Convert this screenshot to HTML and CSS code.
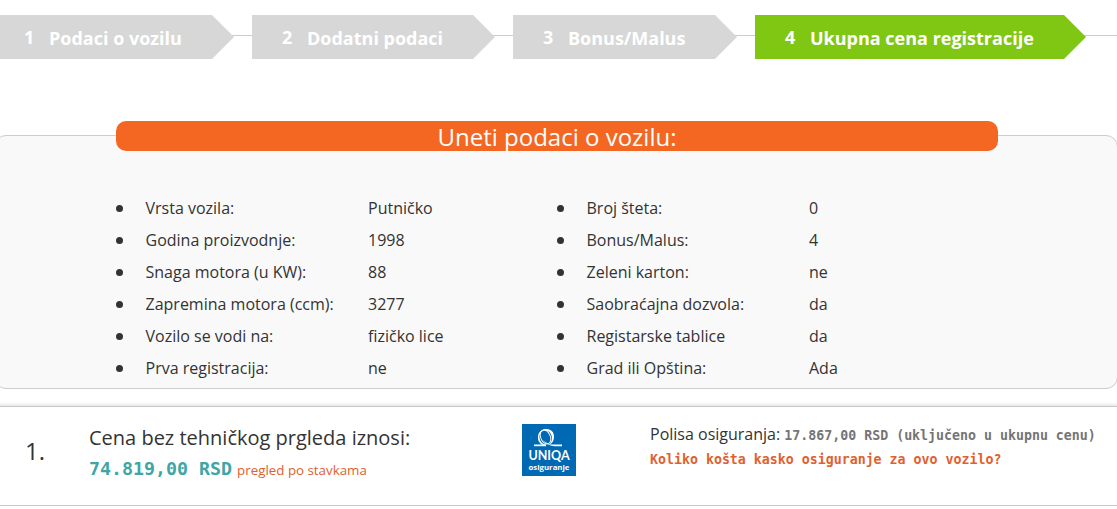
FILE: index.html
```html
<!DOCTYPE html>
<html lang="sr">
<head>
    <meta charset="UTF-8">
    <meta name="viewport" content="width=device-width, initial-scale=1.0">
    <title>Ukupna cena registracije</title>
    <link rel="stylesheet" href="styles.css">
</head>
<body>
    <div class="steps">
        <div class="step step-first"><span class="number">1</span><span class="name">Podaci o vozilu</span></div>
        <div class="step step-second"><span class="number">2</span><span class="name">Dodatni podaci</span></div>
        <div class="step step-third"><span class="number">3</span><span class="name">Bonus/Malus</span></div>
        <div class="step step-last active"><span class="number">4</span><span class="name">Ukupna cena registracije</span></div>
    </div>

    <div class="vehicle">
        <h2>Uneti podaci o vozilu:</h2>
        <div class="lists">
            <ul>
                <li><span class="label">Vrsta vozila:</span><span>Putničko</span></li>
                <li><span class="label">Godina proizvodnje:</span><span>1998</span></li>
                <li><span class="label">Snaga motora (u KW):</span><span>88</span></li>
                <li><span class="label">Zapremina motora (ccm):</span><span>3277</span></li>
                <li><span class="label">Vozilo se vodi na:</span><span>fizičko lice</span></li>
                <li><span class="label">Prva registracija:</span><span>ne</span></li>
            </ul>
            <ul>
                <li><span class="label">Broj šteta:</span><span>0</span></li>
                <li><span class="label">Bonus/Malus:</span><span>4</span></li>
                <li><span class="label">Zeleni karton:</span><span>ne</span></li>
                <li><span class="label">Saobraćajna dozvola:</span><span>da</span></li>
                <li><span class="label">Registarske tablice</span><span>da</span></li>
                <li><span class="label">Grad ili Opština:</span><span>Ada</span></li>
            </ul>
        </div>
    </div>

    <div class="offer">
        <div class="rank">1.</div>
        <div class="price">
            <div class="price-title">Cena bez tehničkog prgleda iznosi:</div>
            <div class="price-line"><span class="total">74.819,00 RSD</span><a class="details">pregled po stavkama</a></div>
        </div>
        <div class="logo">
            <svg class="logo-mark" viewBox="0 0 54 24" width="54" height="24">
                <rect x="12" y="20.500" width="12" height="1.700" fill="#fff"/>
                <path d="M29 20.500H40V22.200H33C28 22.200 24 20 21 16C24.500 19 27 20.300 29 20.500Z" fill="#fff"/>
                <path d="M24 22.200C18 21 15.500 17 16 12.500C16.500 7.500 20 5 24.500 5C29.500 5 32.500 9 32 13.500C31.700 17 30 19.500 27.500 20.500C29.500 18 30.300 15.500 29.800 12.500C29 8.500 26.500 6.500 23.500 6.500C20 6.500 17.500 9 17.500 13C17.500 17 20 20 24 20.700Z" fill="#fff"/>
                <ellipse cx="23.500" cy="13" rx="4.800" ry="7.300" transform="rotate(-24 23.500 13)" fill="none" stroke="#fff" stroke-width="0.900"/>
            </svg>
            <div class="logo-name">UNIQA</div>
            <div class="logo-sub">osiguranje</div>
        </div>
        <div class="policy">
            <div class="policy-line">Polisa osiguranja: <span class="amount">17.867,00 RSD (uključeno u ukupnu cenu)</span></div>
            <a class="kasko">Koliko košta kasko osiguranje za ovo vozilo?</a>
        </div>
    </div>
</body>
</html>
```
FILE: styles.css
```css
body {
margin: 0;
background-color: #fff;
color: #333;
font-family: "Open Sans", sans-serif;
font-size: 16px;
overflow: hidden;
}

.steps {
display: flex;
gap: 18px;
height: 44px;
padding-top: 15px;
background: linear-gradient(#ccc, #ccc) 0 35px / 100% 1px no-repeat;
}

.step {
display: flex;
flex-shrink: 0;
align-items: center;
box-sizing: border-box;
height: 44px;
padding-left: 30px;
background-color: #d7d7d7;
color: #fff;
font-size: 18px;
font-weight: bold;
white-space: nowrap;
clip-path: polygon(0 0, calc(100% - 22px) 0, 100% 50%, calc(100% - 22px) 100%, 0 100%);
}

.step .number {
width: 25px;
line-height: 24px;
padding-bottom: 1px;
}

.step .name {
padding-top: 2px;
}

.step-first {
width: 234px;
padding-left: 24px;
}

.step-second {
width: 243px;
}

.step-third {
width: 224px;
}

.step-last {
width: 331px;
}

.step.active {
background-color: #80c713;
}

.vehicle {
box-sizing: border-box;
height: 254px;
margin: 76px -1px 0 -6px;
padding: 0 117px 0 122px;
background-color: #f9f9f9;
border: 1px solid #ccc;
border-radius: 12px;
}

.vehicle h2 {
width: 882px;
height: 30px;
margin: -15px 0 0 -1px;
background-color: #f46723;
border-radius: 10px;
color: #fff;
font-size: 24px;
font-weight: normal;
line-height: 32px;
text-align: center;
}

.lists {
display: flex;
width: 882px;
margin: 41px 0 0 -1px;
}

.lists ul {
flex: 1;
margin: 0;
padding: 0;
list-style: none;
}

.lists li {
display: flex;
align-items: center;
height: 32px;
}

.lists li::before {
content: "";
width: 7px;
height: 7px;
margin-right: 22.500px;
border-radius: 50%;
background-color: #333;
}

.lists .label {
width: 222.500px;
}

.offer {
display: flex;
box-sizing: border-box;
height: 100px;
margin: 17px -5px 0;
padding-left: 29px;
background-color: #fff;
border: 1px solid #c8c8c8;
border-radius: 4px;
box-shadow: 0 0 5px rgba(0, 0, 0, 0.2);
}

.rank {
width: 64px;
padding-top: 27px;
font-size: 24px;
line-height: 34px;
}

.price {
width: 433px;
padding-top: 17px;
}

.price-title {
font-size: 20px;
line-height: 28px;
}

.price-line {
display: flex;
align-items: baseline;
gap: 5px;
line-height: 34px;
}

.total {
color: #3fa5a5;
font-family: "DejaVu Sans Mono", monospace;
font-size: 18.300px;
font-weight: bold;
}

.details {
color: #e0612e;
font-size: 13.330px;
}

.logo {
width: 54px;
height: 52px;
margin: 17px 74px 0 0;
background-color: #0069b4;
color: #fff;
text-align: center;
}

.logo-mark {
display: block;
}

.logo-name {
font-family: Lato, sans-serif;
font-size: 12.500px;
font-weight: bold;
line-height: 15px;
}

.logo-sub {
font-size: 7.800px;
font-weight: bold;
line-height: 9px;
}

.policy {
padding-top: 15px;
line-height: 25px;
white-space: nowrap;
}

.amount,
.kasko {
font-family: "DejaVu Sans Mono", monospace;
font-size: 13.280px;
font-weight: bold;
}

.amount {
color: #757575;
}

.kasko {
display: block;
line-height: 24px;
color: #e0612e;
}
```
